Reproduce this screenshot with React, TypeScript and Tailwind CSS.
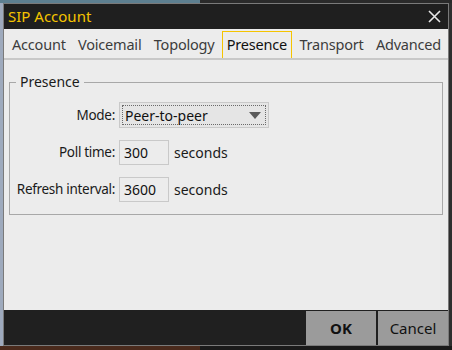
import React from "react";

const font = { fontFamily: '"Noto Sans", "Open Sans", sans-serif' };

function Field({ label, children }: { label: string; children: React.ReactNode }) {
  return (
    <div className="flex items-center">
      <div className="w-[109px] text-right pr-[4px] text-[13.5px] text-[#1a1a1a] whitespace-nowrap tracking-[-0.3px]">{label}</div>
      {children}
    </div>
  );
}

export default function App() {
  const tabs = ["Account", "Voicemail", "Topology", "Presence", "Transport", "Advanced"];
  return (
    <div className="w-[452px] h-[350px] flex flex-col bg-[#1c1c1c] overflow-hidden" style={font}>
      <div className="h-[3px] flex">
        <div className="w-[200px] bg-[#5d7f90]" />
        <div className="flex-1 bg-[#2a2a2a]" />
      </div>
      <div className="flex h-[343px]">
        <div className="w-[3px] bg-[#9eaabd]" />
        <div className="w-[446px] flex flex-col border border-[#7a7a7a] bg-[#ececec]">
          <div className="h-[25px] bg-[#1f1f1f] flex items-center justify-between pl-[4px] pr-[7px]">
            <span className="text-[15px] text-[#f5c400] leading-none">SIP Account</span>
            <svg width="13" height="13" viewBox="0 0 13 13">
              <path d="M1 1 L12 12 M12 1 L1 12" stroke="#e8e8e8" strokeWidth="1.6" />
            </svg>
          </div>
          <div className="flex items-stretch justify-between h-[31px] pl-[3px] pr-[2px] pt-[2px] border-b-2 border-[#c8c8c8]">
            {tabs.map((t) => (
              <div
                key={t}
                className={
                  t === "Presence"
                    ? "px-[4px] flex items-center border border-b-0 border-[#f5c400] text-[14.5px] text-[#111] tracking-[-0.2px]"
                    : "px-[4px] flex items-center border border-transparent text-[14.5px] text-[#3c3c3c] tracking-[-0.2px]"
                }
              >
                {t}
              </div>
            ))}
          </div>
          <div className="flex-1 px-[5px] pt-[22px]">
            <div className="relative border border-[#a8a8a8] h-[133px] flex flex-col gap-[12px] pt-[19px]">
              <span className="absolute -top-[10px] left-[6px] px-[4px] bg-[#ececec] text-[14px] text-[#1a1a1a] leading-[18px]">
                Presence
              </span>
              <Field label="Mode:">
                <div className="w-[150px] h-[26px] bg-[#e5e5e5] border border-[#c9c9c9] p-[2px]">
                  <div className="h-full border border-dotted border-[#6a6a6a] flex items-center justify-between pl-[2px] pr-[4px] text-[14px] text-[#111]">
                    <span>Peer-to-peer</span>
                    <svg width="12" height="7" viewBox="0 0 12 7">
                      <path d="M0 0 L12 0 L6 7 Z" fill="#5a5a5a" />
                    </svg>
                  </div>
                </div>
              </Field>
              <Field label="Poll time:">
                <div className="w-[50px] h-[25px] border border-[#c9c9c9] flex items-center pl-[4px] text-[14px] text-[#111]">300</div>
                <span className="ml-[5px] text-[14px] text-[#1a1a1a]">seconds</span>
              </Field>
              <Field label="Refresh interval:">
                <div className="w-[50px] h-[25px] border border-[#c9c9c9] flex items-center pl-[4px] text-[14px] text-[#111]">3600</div>
                <span className="ml-[5px] text-[14px] text-[#1a1a1a]">seconds</span>
              </Field>
            </div>
          </div>
          <div className="h-[35px] bg-[#202020] flex justify-end gap-[2px] pt-[1px]">
            <button className="w-[70px] bg-[#9b9b9b] text-[15px] font-bold text-[#111]">OK</button>
            <button className="w-[70px] bg-[#9b9b9b] text-[15px] text-[#111]">Cancel</button>
          </div>
        </div>
        <div className="flex-1 bg-[#2e2e2e]" />
      </div>
      <div className="flex-1 flex">
        <div className="w-[200px] bg-[#4a2a1c]" />
        <div className="flex-1 bg-[#1a1a1a]" />
      </div>
    </div>
  );
}
